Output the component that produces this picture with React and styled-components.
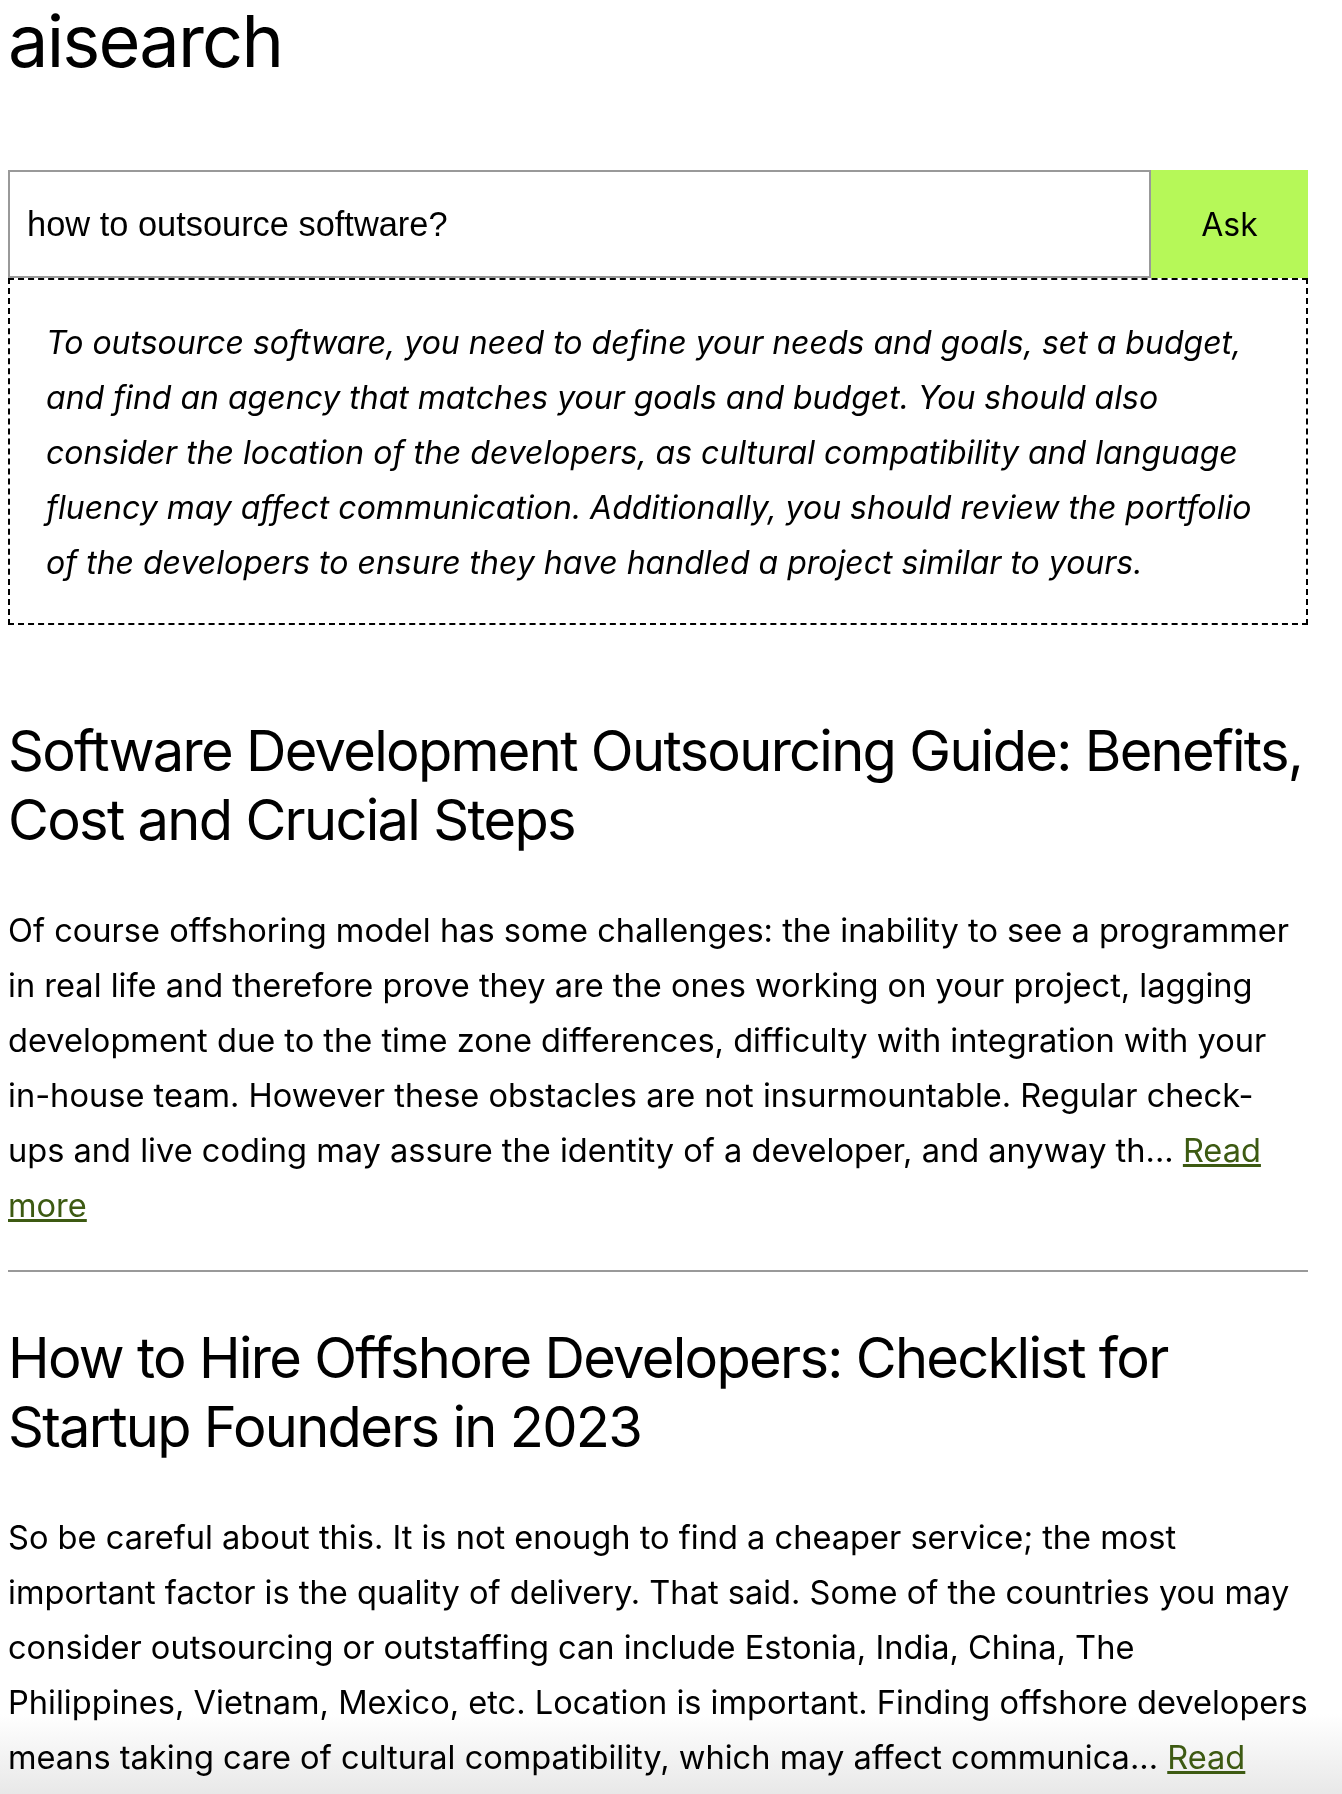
import React from "react";
import styled, { createGlobalStyle } from "styled-components";

const results = [
  {
    key: "r1",
    title:
      "Software Development Outsourcing Guide: Benefits, Cost and Crucial Steps",
    text:
      "Of course offshoring model has some challenges: the inability to see a programmer in real life and therefore prove they are the ones working on your project, lagging development due to the time zone differences, difficulty with integration with your in-house team. However these obstacles are not insurmountable. Regular check-ups and live coding may assure the identity of a developer, and anyway th...",
  },
  {
    key: "r2",
    title: "How to Hire Offshore Developers: Checklist for Startup Founders in 2023",
    text:
      "So be careful about this. It is not enough to find a cheaper service; the most important factor is the quality of delivery. That said. Some of the countries you may consider outsourcing or outstaffing can include Estonia, India, China, The Philippines, Vietnam, Mexico, etc. Location is important. Finding offshore developers means taking care of cultural compatibility, which may affect communica...",
  },
];

const answer =
  "To outsource software, you need to define your needs and goals, set a budget, and find an agency that matches your goals and budget. You should also consider the location of the developers, as cultural compatibility and language fluency may affect communication. Additionally, you should review the portfolio of the developers to ensure they have handled a project similar to yours.";

function App() {
  return (
    <>
      <GlobalStyle />
      <S.Fade />
      <S.Page>
        <S.Title>aisearch</S.Title>

        <S.Form onSubmit={(e) => e.preventDefault()}>
          <S.Input defaultValue="how to outsource software?" />
          <S.AskButton type="submit">Ask</S.AskButton>
        </S.Form>

        <S.Answer>{answer}</S.Answer>

        {results.map(({ key, title, text }, i) => (
          <S.Result key={key} $first={i === 0}>
            <S.ResultTitle>{title}</S.ResultTitle>
            <S.ResultText>
              {text} <S.ReadMore href="#">Read more</S.ReadMore>
            </S.ResultText>
          </S.Result>
        ))}
      </S.Page>
    </>
  );
}

const GlobalStyle = createGlobalStyle`
  body {
    margin: 8px;
    font-family: Inter, "Noto Sans", sans-serif;
    color: #000;
    background: #fff;
  }
`;

// S = search page
const S = {
  Page: styled.div`
    width: 1300px;
  `,

  Title: styled.h1`
    margin: -3px 0 0;
    font-size: 72px;
    font-weight: 400;
    line-height: 1;
    letter-spacing: -1.8px;
  `,

  Form: styled.form`
    display: flex;
    margin-top: 93px;
    height: 108px;
  `,

  Input: styled.input`
    flex: 1;
    min-width: 0;
    box-sizing: border-box;
    height: 100%;
    margin: 0;
    padding: 0 17px;
    border: 2px solid #999;
    font-family: "Liberation Sans", Arial, sans-serif;
    font-size: 34.4px;
    color: #000;
    background: #fff;
    outline: none;
  `,

  AskButton: styled.button`
    width: 157px;
    height: 100%;
    margin: 0;
    border: none;
    background: #b6f858;
    font-family: Inter, sans-serif;
    font-size: 32px;
    color: #000;
  `,

  Answer: styled.div`
    box-sizing: border-box;
    border: 2px dashed #000;
    padding: 35px 27px 33px 36px;
    font-size: 32px;
    font-style: italic;
    line-height: 55px;
  `,

  Result: styled.section`
    padding-top: ${({ $first }) => ($first ? "92px" : "52px")};
    & + & {
      border-top: 2px solid #999;
    }
  `,

  ResultTitle: styled.h2`
    margin: 0;
    font-size: 56px;
    font-weight: 400;
    line-height: 69px;
    letter-spacing: -1.7px;
  `,

  ResultText: styled.p`
    margin: 48px 0 37px;
    font-size: 32.6px;
    line-height: 55px;
  `,

  ReadMore: styled.a`
    color: #3d5a12;
    text-decoration: underline;
  `,

  // light grey shade behind the bottom edge of the window
  Fade: styled.div`
    position: fixed;
    z-index: -1;
    left: 0;
    right: 0;
    bottom: 0;
    height: 80px;
    pointer-events: none;
    background: linear-gradient(to bottom, #fff, #e8e8e8);
  `,
};

export default App;
